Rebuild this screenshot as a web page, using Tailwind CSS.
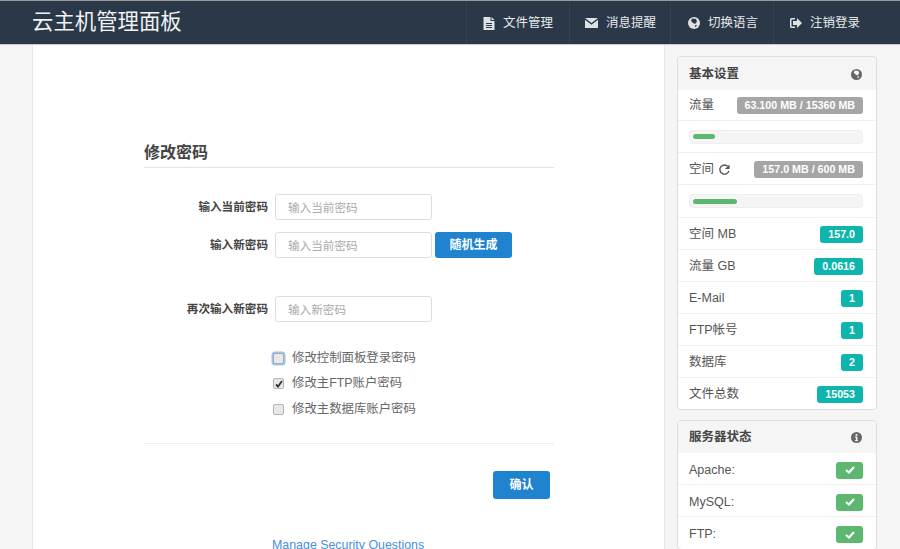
<!DOCTYPE html>
<html lang="zh-CN">
<head>
  <meta charset="UTF-8">
  <meta name="viewport" content="width=device-width, initial-scale=1.0">
  <script src="https://cdn.jsdelivr.net/npm/@tailwindcss/browser@4"></script>
  <title>云主机管理面板</title>
</head>
<body class="h-[549px] overflow-hidden bg-[#f5f5f5] font-['Liberation_Sans','Noto_Sans_CJK_SC',sans-serif] text-[12.5px] text-[#555]">
  <!-- 顶部导航 -->
  <header class="h-[45px] bg-[#2a3848] border-t border-t-[#999] border-b border-b-[#c8ccd0] flex justify-between text-[#e6e8ea]">
    <div class="pl-[32px] text-[21.400px] leading-[43px] text-[#f0f2f4]">云主机管理面板</div>
    <nav class="flex pr-[25px] pt-[1px]">
      <a class="w-[103px] pl-[16px] flex items-center gap-[8px] border-l border-[#344252]">
        <svg class="w-[12px] h-[13px]" viewBox="0 0 12 13" fill="#dfe2e5"><path d="M.5 0h7v4H11.500v9H.5z"/><path d="M8.500 0L11.500 3H8.500z"/><path d="M3 6h6v1H3zM3 8h6v1H3zM3 10h6v1H3z" fill="#2a3848"/></svg>
        <span>文件管理</span>
      </a>
      <a class="w-[101px] pl-[15px] flex items-center gap-[8px] border-l border-[#344252]">
        <svg class="w-[13px] h-[10px]" viewBox="0 0 13 10" fill="#dfe2e5"><path d="M0 0h13L6.500 5z"/><path d="M0 1.800l6.500 5 6.500-5V10H0z"/></svg>
        <span>消息提醒</span>
      </a>
      <a class="w-[103px] pl-[17px] flex items-center gap-[8px] border-l border-[#344252]">
        <svg class="w-[12px] h-[12px]" viewBox="0 0 12 12"><circle cx="6" cy="6" r="6" fill="#dfe2e5"/><path d="M4 1.500l4 .5 1 2.500-2 2.500-2-1-2-2zM7 8l2 0-1.500 2.500z" fill="#2a3848"/></svg>
        <span>切换语言</span>
      </a>
      <a class="w-[102px] pl-[16px] flex items-center gap-[8px] border-l border-[#344252]">
        <svg class="w-[12px] h-[10px]" viewBox="0 0 12 10" fill="#dfe2e5"><path d="M5 0H1.500A1.500 1.500 0 0 0 0 1.500v7A1.500 1.500 0 0 0 1.500 10H5V8.500H1.500v-7H5z"/><path d="M7 0l5 5-5 5V7H3V3h4z"/></svg>
        <span>注销登录</span>
      </a>
    </nav>
  </header>

  <div class="flex items-start">
    <!-- 主内容 -->
    <main class="ml-[32px] w-[633px] h-[504px] bg-white border-x border-[#e8e8e8] pl-[111px] pr-[110px] pt-[96px]">
      <h3 class="text-[16px] leading-[24px] font-bold text-[#444] pb-[2px] border-b border-[#e5e5e5]">修改密码</h3>

      <div class="mt-[26px] flex items-center h-[26px]">
        <label class="w-[124px] text-right font-bold text-[11.600px] text-[#444]">输入当前密码</label>
        <input class="ml-[7px] w-[157px] h-[26px] px-[12px] text-[11.600px] border border-[#ddd] rounded-[3px] placeholder:text-[#aaa]" placeholder="输入当前密码">
      </div>
      <div class="mt-[12px] flex items-center h-[26px]">
        <label class="w-[124px] text-right font-bold text-[11.600px] text-[#444]">输入新密码</label>
        <input class="ml-[7px] w-[157px] h-[26px] px-[12px] text-[11.600px] border border-[#ddd] rounded-[3px] placeholder:text-[#aaa]" placeholder="输入当前密码">
        <button class="ml-[3px] w-[77px] h-[26px] bg-[#2083d0] rounded-[3px] text-white font-bold text-[12px]">随机生成</button>
      </div>
      <div class="mt-[38px] flex items-center h-[26px]">
        <label class="w-[124px] text-right font-bold text-[11.600px] text-[#444]">再次输入新密码</label>
        <input class="ml-[7px] w-[157px] h-[26px] px-[12px] text-[11.600px] border border-[#ddd] rounded-[3px] placeholder:text-[#aaa]" placeholder="输入新密码">
      </div>

      <div class="mt-[27px] ml-[128px] flex flex-col gap-[7.500px] text-[12.400px] text-[#666]">
        <div class="h-[18px] flex items-center">
          <span class="w-[11px] h-[11px] ml-[1px] bg-[#e8e8e8] border border-[#a9a9a9] rounded-[2px] ring-[1.500px] ring-[#9fc2ee]"></span>
          <span class="ml-[8px]">修改控制面板登录密码</span>
        </div>
        <div class="h-[18px] flex items-center">
          <span class="w-[11px] h-[11px] ml-[1px] bg-[#e8e8e8] border border-[#b5b5b5] rounded-[2px] flex items-center justify-center">
            <svg class="w-[8px] h-[8px]" viewBox="0 0 8 8" fill="none" stroke="#333" stroke-width="1.800"><path d="M1 4.500l2 2L7 1"/></svg>
          </span>
          <span class="ml-[8px]">修改主FTP账户密码</span>
        </div>
        <div class="h-[18px] flex items-center">
          <span class="w-[11px] h-[11px] ml-[1px] bg-[#e8e8e8] border border-[#b5b5b5] rounded-[2px]"></span>
          <span class="ml-[8px]">修改主数据库账户密码</span>
        </div>
      </div>

      <hr class="mt-[25px] border-[#eee]">
      <div class="mt-[27px] flex justify-end pr-[4px]">
        <button class="w-[57px] h-[28px] bg-[#2083d0] rounded-[3px] text-white font-bold text-[12px]">确认</button>
      </div>
      <div class="mt-[37px] ml-[128px] text-[12.400px] text-[#4a90d9]">Manage Security Questions</div>
    </main>

    <!-- 侧边栏 -->
    <aside class="ml-[12px] w-[200px] mt-[11px] flex flex-col gap-[10px]">
      <section class="bg-white border border-[#ddd] rounded-[4px]">
        <div class="h-[33px] pt-[1px] bg-[#f5f5f5] pl-[11px] pr-[14px] flex items-center justify-between font-bold text-[#444] rounded-t-[4px]">
          <span>基本设置</span>
          <svg class="w-[11px] h-[11px]" viewBox="0 0 12 12"><circle cx="6" cy="6" r="6" fill="#666"/><path d="M4 1.500l4 .5 1 2.500-2 2.500-2-1-2-2zM7 8l2 0-1.500 2.500z" fill="#f5f5f5"/></svg>
        </div>
        <div class="h-[31px] pt-[1px] pl-[11px] pr-[13px] flex items-center justify-between border-b border-[#f0f0f0]">
          <span>流量</span>
          <span class="h-[17px] px-[8px] leading-[17px] bg-[#a6a6a6] rounded-[3px] text-white font-bold text-[10.700px]">63.100 MB / 15360 MB</span>
        </div>
        <div class="h-[32px] pl-[11px] pr-[13px] flex items-center border-b border-[#f0f0f0]">
          <div class="w-full h-[14px] bg-[#f5f5f5] border border-[#eee] rounded-[4px] px-[3px] flex items-center">
            <div class="w-[21.500px] h-[5px] bg-[#5cb871] rounded-full"></div>
          </div>
        </div>
        <div class="h-[32px] pt-[1px] pl-[11px] pr-[13px] flex items-center justify-between border-b border-[#f0f0f0]">
          <span class="flex items-center gap-[5px]">空间
            <svg class="w-[11px] h-[11px]" viewBox="0 0 12 12" fill="none" stroke="#555" stroke-width="1.500"><path d="M10.800 7.500A5 5 0 1 1 9.500 2.500"/><path d="M11.500 .5v5h-5z" fill="#555" stroke="none"/></svg>
          </span>
          <span class="h-[17px] px-[8px] leading-[17px] bg-[#a6a6a6] rounded-[3px] text-white font-bold text-[10.700px]">157.0 MB / 600 MB</span>
        </div>
        <div class="h-[33px] pl-[11px] pr-[13px] flex items-center border-b border-[#f0f0f0]">
          <div class="w-full h-[14px] bg-[#f5f5f5] border border-[#eee] rounded-[4px] px-[3px] flex items-center">
            <div class="w-[43.500px] h-[5px] bg-[#5cb871] rounded-full"></div>
          </div>
        </div>
        <div class="h-[32px] pt-[1px] pl-[11px] pr-[13px] flex items-center justify-between border-b border-[#f0f0f0]">
          <span>空间 MB</span>
          <span class="h-[17px] px-[8px] leading-[17px] bg-[#0db5ad] rounded-[3px] text-white font-bold text-[10.700px]">157.0</span>
        </div>
        <div class="h-[32px] pt-[1px] pl-[11px] pr-[13px] flex items-center justify-between border-b border-[#f0f0f0]">
          <span>流量 GB</span>
          <span class="h-[17px] px-[8px] leading-[17px] bg-[#0db5ad] rounded-[3px] text-white font-bold text-[10.700px]">0.0616</span>
        </div>
        <div class="h-[32px] pt-[1px] pl-[11px] pr-[13px] flex items-center justify-between border-b border-[#f0f0f0]">
          <span>E-Mail</span>
          <span class="h-[17px] px-[8px] leading-[17px] bg-[#0db5ad] rounded-[3px] text-white font-bold text-[10.700px]">1</span>
        </div>
        <div class="h-[32px] pt-[1px] pl-[11px] pr-[13px] flex items-center justify-between border-b border-[#f0f0f0]">
          <span>FTP帐号</span>
          <span class="h-[17px] px-[8px] leading-[17px] bg-[#0db5ad] rounded-[3px] text-white font-bold text-[10.700px]">1</span>
        </div>
        <div class="h-[32px] pt-[1px] pl-[11px] pr-[13px] flex items-center justify-between border-b border-[#f0f0f0]">
          <span>数据库</span>
          <span class="h-[17px] px-[8px] leading-[17px] bg-[#0db5ad] rounded-[3px] text-white font-bold text-[10.700px]">2</span>
        </div>
        <div class="h-[31px] pt-[1px] pl-[11px] pr-[13px] flex items-center justify-between">
          <span>文件总数</span>
          <span class="h-[17px] px-[8px] leading-[17px] bg-[#0db5ad] rounded-[3px] text-white font-bold text-[10.700px]">15053</span>
        </div>
      </section>

      <section class="bg-white border border-[#ddd] rounded-[4px]">
        <div class="h-[32px] pt-[1px] bg-[#f5f5f5] pl-[11px] pr-[14px] flex items-center justify-between font-bold text-[#444] rounded-t-[4px]">
          <span>服务器状态</span>
          <svg class="w-[11px] h-[11px]" viewBox="0 0 12 12"><circle cx="6" cy="6" r="6" fill="#666"/><path d="M5 2.200h2v1.800H5zM4.500 5h2.500v3.800h.7V10H4.500V8.800h.8V6.200h-.8z" fill="#f5f5f5"/></svg>
        </div>
        <div class="h-[32px] pt-[3px] pl-[11px] pr-[13px] flex items-center justify-between border-b border-[#f0f0f0]">
          <span>Apache:</span>
          <span class="w-[27px] h-[17px] bg-[#5cb871] rounded-[3px] flex items-center justify-center">
            <svg class="w-[10px] h-[8px]" viewBox="0 0 10 8" fill="none" stroke="#fff" stroke-width="2.200"><path d="M1 4l3 2.500L9 1"/></svg>
          </span>
        </div>
        <div class="h-[32px] pt-[3px] pl-[11px] pr-[13px] flex items-center justify-between border-b border-[#f0f0f0]">
          <span>MySQL:</span>
          <span class="w-[27px] h-[17px] bg-[#5cb871] rounded-[3px] flex items-center justify-center">
            <svg class="w-[10px] h-[8px]" viewBox="0 0 10 8" fill="none" stroke="#fff" stroke-width="2.200"><path d="M1 4l3 2.500L9 1"/></svg>
          </span>
        </div>
        <div class="h-[32px] pt-[3px] pl-[11px] pr-[13px] flex items-center justify-between">
          <span>FTP:</span>
          <span class="w-[27px] h-[17px] bg-[#5cb871] rounded-[3px] flex items-center justify-center">
            <svg class="w-[10px] h-[8px]" viewBox="0 0 10 8" fill="none" stroke="#fff" stroke-width="2.200"><path d="M1 4l3 2.500L9 1"/></svg>
          </span>
        </div>
      </section>
    </aside>
  </div>
</body>
</html>
